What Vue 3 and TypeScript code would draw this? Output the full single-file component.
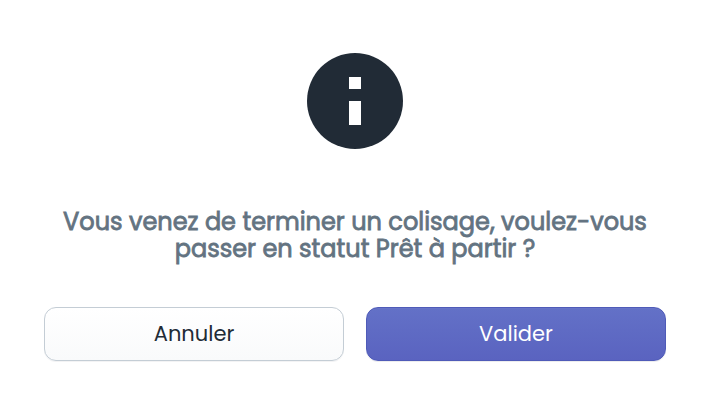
<script setup lang="ts">
interface DialogAction {
  label: string
  variant: 'default' | 'primary'
}

const message = 'Vous venez de terminer un colisage, voulez-vous passer en statut Prêt à partir ?'

const actions: DialogAction[] = [
  { label: 'Annuler', variant: 'default' },
  { label: 'Valider', variant: 'primary' },
]
</script>

<template>
  <main class="dialog">
    <svg class="info-icon" viewBox="0 0 96 96" aria-hidden="true">
      <circle cx="48" cy="48" r="48" fill="#212b36" />
      <path d="M42 24h12v12H42zM42 48h12v24H42z" fill="#fff" />
    </svg>
    <h1 class="message">{{ message }}</h1>
    <div class="actions">
      <button
        v-for="action in actions"
        :key="action.label"
        type="button"
        class="button"
        :class="action.variant"
      >{{ action.label }}</button>
    </div>
  </main>
</template>

<style>
body {
  margin: 0;
  background: #fff;
}
</style>

<style scoped>
.dialog {
  box-sizing: border-box;
  width: 710px;
  height: 409px;
  padding: 53px 44px 48px;
  display: flex;
  flex-direction: column;
  align-items: center;
  font-family: Poppins, Inter, "Liberation Sans", sans-serif;
}

.info-icon {
  display: block;
  width: 96px;
  height: 96px;
}

.message {
  width: 100%;
  margin: 59px 0 0;
  font-size: 24px;
  font-weight: 400;
  line-height: 27px;
  text-align: center;
  color: #637381;
  -webkit-text-stroke: 0.8px #637381;
}

.actions {
  width: 100%;
  margin-top: 45px;
  display: grid;
  grid-template-columns: 300px 300px;
  gap: 22px;
}

.button {
  box-sizing: border-box;
  height: 54px;
  padding: 0;
  border: 1px solid #c4cdd5;
  border-radius: 12px;
  font-family: inherit;
  font-size: 21px;
  font-weight: 400;
  line-height: 24px;
}

.default {
  color: #212b36;
  background: linear-gradient(to bottom, #ffffff, #f9fafb);
  box-shadow: 0 1px 0 rgba(22, 29, 37, 0.05);
}

.primary {
  color: #fff;
  border-color: #4f5bb8;
  background: linear-gradient(to bottom, #6371c7, #5a63c0);
  box-shadow: inset 0 1px 0 #6774c8, 0 1px 0 rgba(22, 29, 37, 0.08);
}
</style>
